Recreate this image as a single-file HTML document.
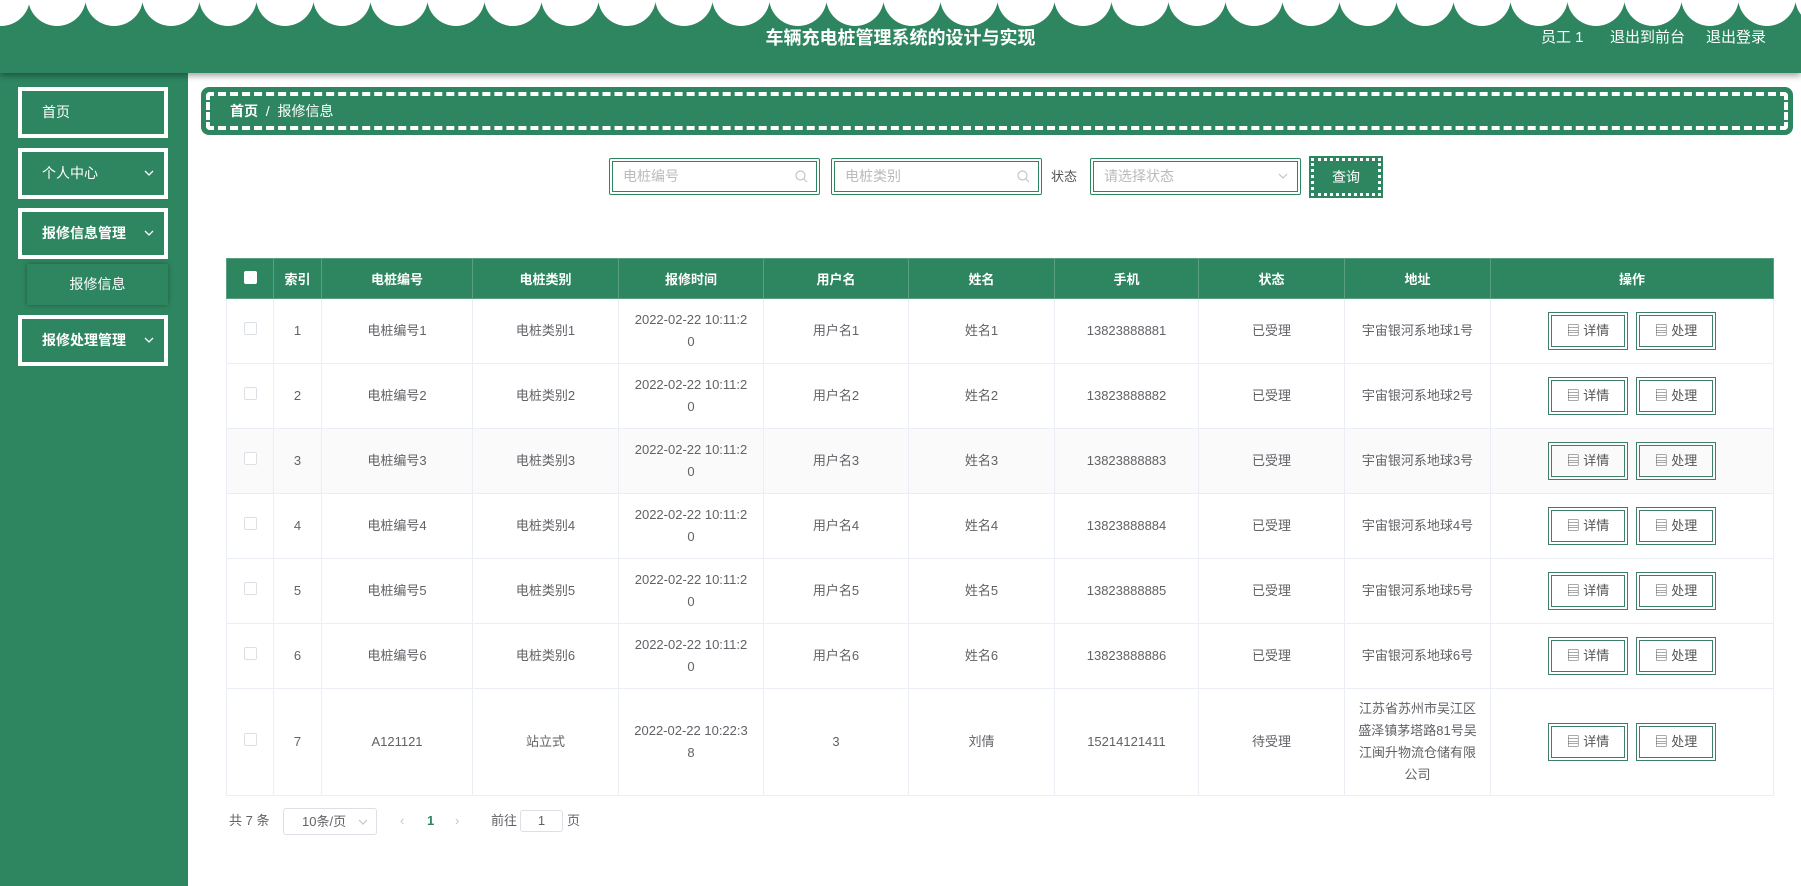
<!DOCTYPE html>
<html><head><meta charset="utf-8"><style>
*{box-sizing:border-box;margin:0;padding:0}
body{width:1801px;height:886px;overflow:hidden;background:#fff;font-family:"Liberation Sans","Noto Sans CJK SC",sans-serif;position:relative;color:#555}
.hd{position:absolute;left:0;top:0;width:1801px;height:73px;background:#2e8660;box-shadow:0 3px 6px rgba(0,0,0,.35);z-index:3;overflow:hidden}
.sc{position:absolute;top:-32px;width:58px;height:58px;border-radius:50%;background:#fff}
.title{position:absolute;left:0;width:1801px;top:24px;text-align:center;padding-left:0;color:#fff;font-weight:bold;font-size:18px}
.tr{position:absolute;top:26px;color:#fff;font-size:15px}
.sb{position:absolute;left:0;top:73px;width:188px;height:813px;background:#2e8660}
.mi{position:absolute;left:18px;width:150px;height:51px;border:4px solid #fff;color:#fff;font-size:14px;line-height:43px;padding-left:20px}
.mi svg{position:absolute;right:10px;top:17px}
.sub{position:absolute;left:27px;top:264px;width:141px;height:41px;background:#2e8660;box-shadow:0 0 5px rgba(0,0,0,.35);color:#fff;font-size:14px;line-height:41px;text-align:center}
.bc{position:absolute;left:201px;top:87px;width:1592px;height:48px;background:#2e8660;border-radius:8px}
.bc .in{position:absolute;left:5px;top:5px;right:5px;bottom:5px;border:4px dashed #fff;border-radius:4px;color:#fff;font-size:14px;line-height:30px;padding-left:20px}
.ip{position:absolute;top:158px;height:37px;border:4px double #2e8660;border-radius:2px;color:#bbb;font-size:14px;line-height:29px;padding-left:10px}
.ip svg{position:absolute;right:8px;top:8px}
table{position:absolute;left:226px;top:258px;border-collapse:collapse;width:1547px;table-layout:fixed}
th{background:#2e8660;color:#fff;font-size:13px;font-weight:bold;height:40px;border:1px solid #5a9f80}
td{border:1px solid #ebeef5;height:65px;text-align:center;font-size:13px;color:#606266;line-height:22px}
tr.g td{background:#fafafa}
.cb{display:inline-block;width:13px;height:13px;border:1px solid #dcdfe6;border-radius:2px;background:#fff}
.hcb{display:inline-block;width:13px;height:13px;background:#fff;border-radius:2px}
.btn{display:inline-block;width:80px;height:38px;border:4px double #3f7f68;line-height:30px;font-size:13px;color:#555;margin:0 4px;vertical-align:middle}
.pg{position:absolute;top:808px;font-size:13px;color:#606266;line-height:26px}
</style></head><body>
<div class="hd">
<div class="sc" style="left:-28px"></div><div class="sc" style="left:28px"></div><div class="sc" style="left:85px"></div><div class="sc" style="left:142px"></div><div class="sc" style="left:199px"></div><div class="sc" style="left:256px"></div><div class="sc" style="left:313px"></div><div class="sc" style="left:370px"></div><div class="sc" style="left:427px"></div><div class="sc" style="left:484px"></div><div class="sc" style="left:541px"></div><div class="sc" style="left:598px"></div><div class="sc" style="left:655px"></div><div class="sc" style="left:712px"></div><div class="sc" style="left:769px"></div><div class="sc" style="left:826px"></div><div class="sc" style="left:883px"></div><div class="sc" style="left:940px"></div><div class="sc" style="left:997px"></div><div class="sc" style="left:1054px"></div><div class="sc" style="left:1111px"></div><div class="sc" style="left:1168px"></div><div class="sc" style="left:1225px"></div><div class="sc" style="left:1282px"></div><div class="sc" style="left:1339px"></div><div class="sc" style="left:1396px"></div><div class="sc" style="left:1453px"></div><div class="sc" style="left:1510px"></div><div class="sc" style="left:1567px"></div><div class="sc" style="left:1624px"></div><div class="sc" style="left:1681px"></div><div class="sc" style="left:1738px"></div><div class="sc" style="left:1795px"></div>
<div class="title">车辆充电桩管理系统的设计与实现</div>
<div class="tr" style="left:1541px">员工 1</div>
<div class="tr" style="left:1610px">退出到前台</div>
<div class="tr" style="left:1706px">退出登录</div>
</div>
<div class="sb"></div>
<div class="mi" style="top:87px">首页</div>
<div class="mi" style="top:148px">个人中心<svg width="10" height="8" viewBox="0 0 10 8"><path d="M1 2l4 4 4-4" fill="none" stroke="#fff" stroke-width="1.3"/></svg></div>
<div class="mi" style="top:208px;font-weight:bold">报修信息管理<svg width="10" height="8" viewBox="0 0 10 8"><path d="M1 2l4 4 4-4" fill="none" stroke="#fff" stroke-width="1.3"/></svg></div>
<div class="sub">报修信息</div>
<div class="mi" style="top:315px;font-weight:bold">报修处理管理<svg width="10" height="8" viewBox="0 0 10 8"><path d="M1 2l4 4 4-4" fill="none" stroke="#fff" stroke-width="1.3"/></svg></div>
<div class="bc"><div class="in"><b>首页</b> &nbsp;/&nbsp; 报修信息</div></div>
<div class="ip" style="left:609px;width:211px">电桩编号<svg width="13" height="13" viewBox="0 0 13 13"><circle cx="5.5" cy="5.5" r="4.5" fill="none" stroke="#c0c4cc" stroke-width="1.2"/><path d="M9 9l3 3" stroke="#c0c4cc" stroke-width="1.2"/></svg></div>
<div class="ip" style="left:831px;width:211px">电桩类别<svg width="13" height="13" viewBox="0 0 13 13"><circle cx="5.5" cy="5.5" r="4.5" fill="none" stroke="#c0c4cc" stroke-width="1.2"/><path d="M9 9l3 3" stroke="#c0c4cc" stroke-width="1.2"/></svg></div>
<div style="position:absolute;left:1051px;top:166px;font-size:13px;color:#555">状态</div>
<div class="ip" style="left:1090px;width:211px">请选择状态<svg width="12" height="12" viewBox="0 0 12 12"><path d="M2 4l4 4 4-4" fill="none" stroke="#c0c4cc" stroke-width="1.2"/></svg></div>
<div style="position:absolute;left:1311px;top:158px;width:70px;height:38px;background:#2e8660;border:3px dotted #fff;outline:2px solid #2e8660;color:#fff;font-size:14px;text-align:center;line-height:32px">查询</div>
<table>
<colgroup><col style="width:47px"><col style="width:48px"><col style="width:151px"><col style="width:146px"><col style="width:145px"><col style="width:145px"><col style="width:146px"><col style="width:144px"><col style="width:146px"><col style="width:146px"><col style="width:283px"></colgroup>
<tr><th><span class="hcb"></span></th><th>索引</th><th>电桩编号</th><th>电桩类别</th><th>报修时间</th><th>用户名</th><th>姓名</th><th>手机</th><th>状态</th><th>地址</th><th>操作</th></tr>
<tr><td><span class="cb"></span></td><td>1</td><td>电桩编号1</td><td>电桩类别1</td><td>2022-02-22 10:11:2<br>0</td><td>用户名1</td><td>姓名1</td><td>13823888881</td><td>已受理</td><td>宇宙银河系地球1号</td><td><span class="btn">&#9636; 详情</span><span class="btn">&#9636; 处理</span></td></tr>
<tr><td><span class="cb"></span></td><td>2</td><td>电桩编号2</td><td>电桩类别2</td><td>2022-02-22 10:11:2<br>0</td><td>用户名2</td><td>姓名2</td><td>13823888882</td><td>已受理</td><td>宇宙银河系地球2号</td><td><span class="btn">&#9636; 详情</span><span class="btn">&#9636; 处理</span></td></tr>
<tr class="g"><td><span class="cb"></span></td><td>3</td><td>电桩编号3</td><td>电桩类别3</td><td>2022-02-22 10:11:2<br>0</td><td>用户名3</td><td>姓名3</td><td>13823888883</td><td>已受理</td><td>宇宙银河系地球3号</td><td><span class="btn">&#9636; 详情</span><span class="btn">&#9636; 处理</span></td></tr>
<tr><td><span class="cb"></span></td><td>4</td><td>电桩编号4</td><td>电桩类别4</td><td>2022-02-22 10:11:2<br>0</td><td>用户名4</td><td>姓名4</td><td>13823888884</td><td>已受理</td><td>宇宙银河系地球4号</td><td><span class="btn">&#9636; 详情</span><span class="btn">&#9636; 处理</span></td></tr>
<tr><td><span class="cb"></span></td><td>5</td><td>电桩编号5</td><td>电桩类别5</td><td>2022-02-22 10:11:2<br>0</td><td>用户名5</td><td>姓名5</td><td>13823888885</td><td>已受理</td><td>宇宙银河系地球5号</td><td><span class="btn">&#9636; 详情</span><span class="btn">&#9636; 处理</span></td></tr>
<tr><td><span class="cb"></span></td><td>6</td><td>电桩编号6</td><td>电桩类别6</td><td>2022-02-22 10:11:2<br>0</td><td>用户名6</td><td>姓名6</td><td>13823888886</td><td>已受理</td><td>宇宙银河系地球6号</td><td><span class="btn">&#9636; 详情</span><span class="btn">&#9636; 处理</span></td></tr>
<tr><td style="height:107px"><span class="cb"></span></td><td>7</td><td>A121121</td><td>站立式</td><td>2022-02-22 10:22:3<br>8</td><td>3</td><td>刘倩</td><td>15214121411</td><td>待受理</td><td>江苏省苏州市吴江区<br>盛泽镇茅塔路81号吴<br>江闽升物流仓储有限<br>公司</td><td><span class="btn">&#9636; 详情</span><span class="btn">&#9636; 处理</span></td></tr>
</table>
<div class="pg" style="left:229px">共 7 条</div>
<div class="pg" style="left:283px;width:94px;height:27px;border:1px solid #dcdfe6;border-radius:3px;padding-left:18px;line-height:25px">10条/页<svg style="position:absolute;right:8px;top:9px" width="10" height="8" viewBox="0 0 10 8"><path d="M1 2l4 4 4-4" fill="none" stroke="#c0c4cc" stroke-width="1.2"/></svg></div>
<div class="pg" style="left:400px;color:#c0c4cc">&lsaquo;</div>
<div class="pg" style="left:427px;color:#2e8660;font-weight:bold">1</div>
<div class="pg" style="left:455px;color:#c0c4cc">&rsaquo;</div>
<div class="pg" style="left:491px">前往</div>
<div class="pg" style="left:520px;width:43px;height:22px;top:810px;border:1px solid #dcdfe6;border-radius:3px;text-align:center;line-height:20px">1</div>
<div class="pg" style="left:567px">页</div>
</body></html>
